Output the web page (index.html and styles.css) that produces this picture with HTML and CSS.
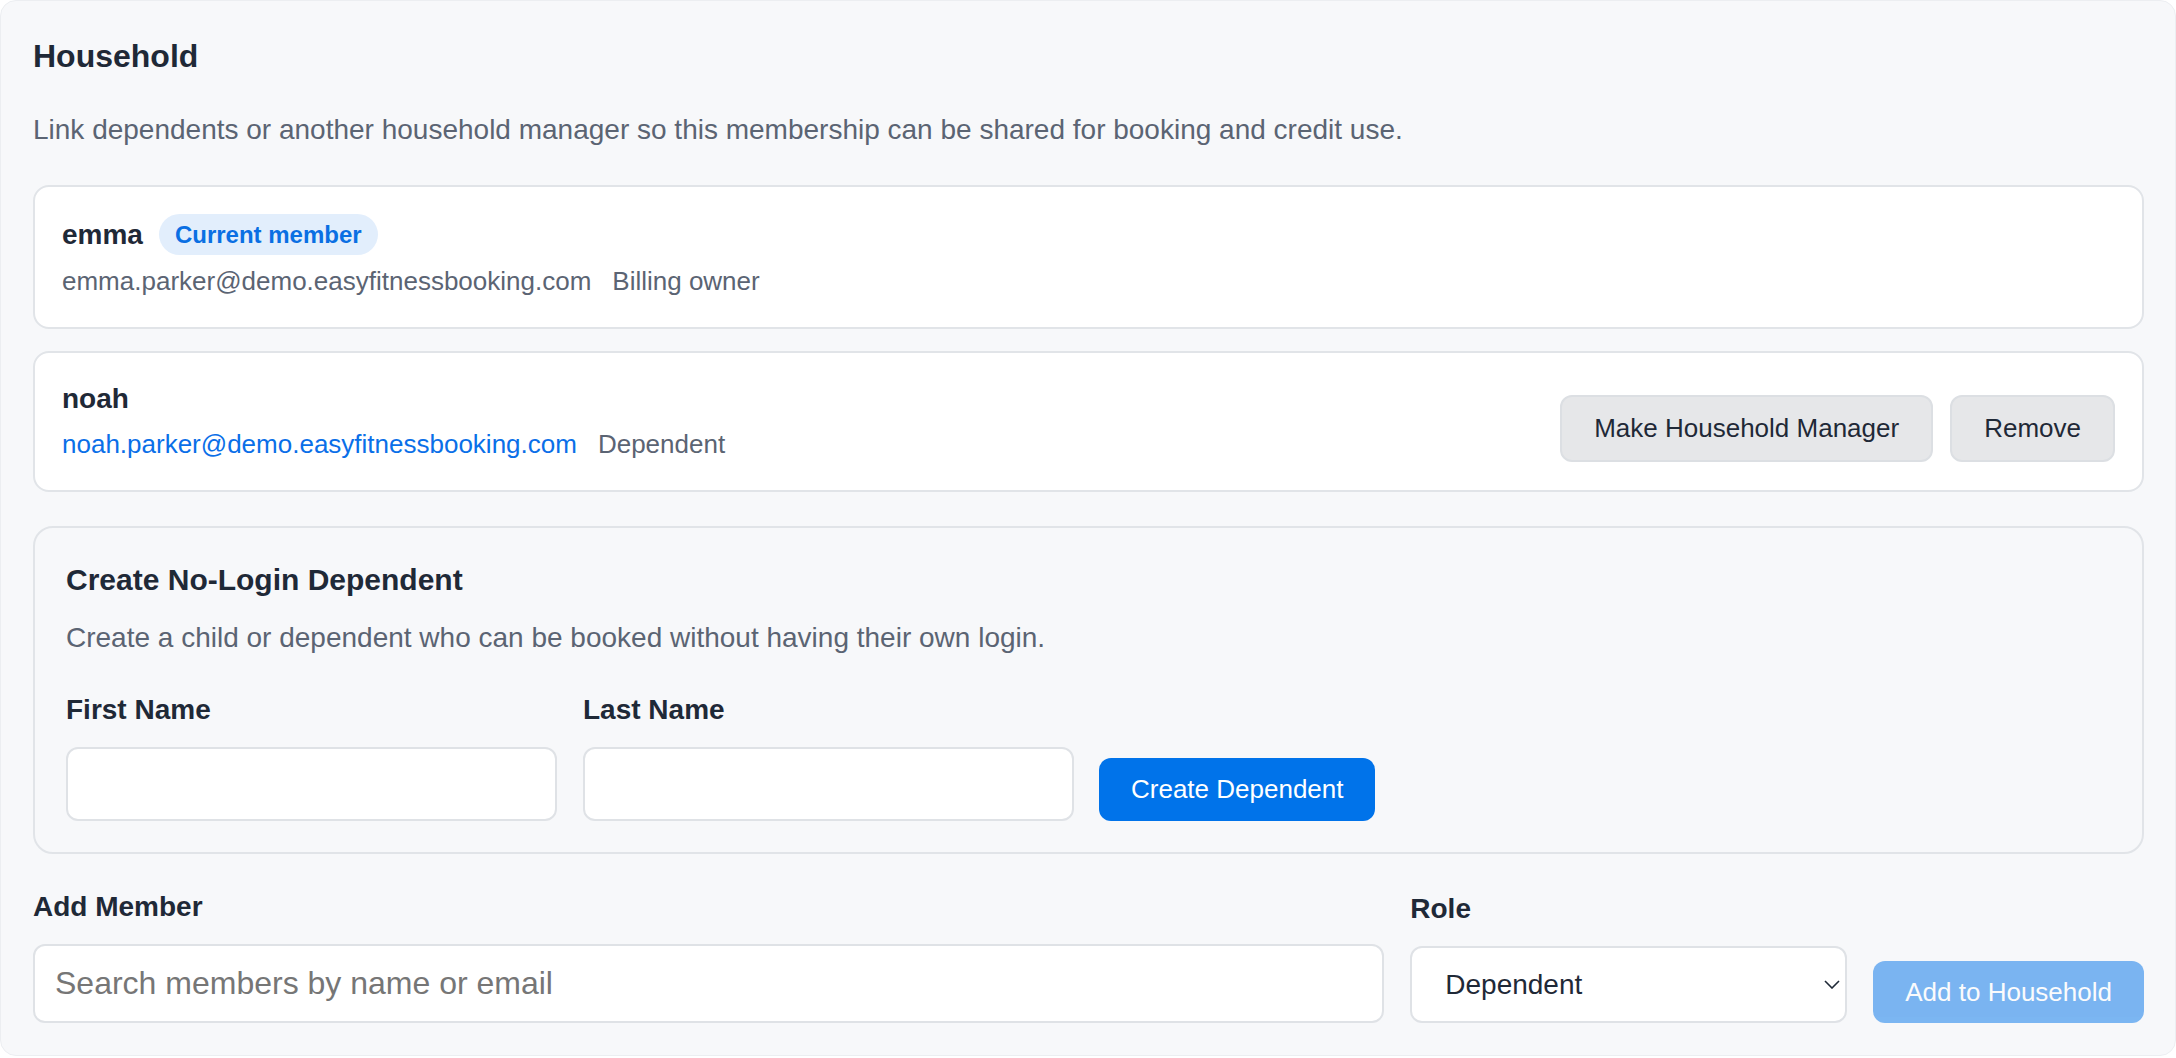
FILE: index.html
```html
<!DOCTYPE html>
<html lang="en">
<head>
    <title>Household</title>
    <meta charset="UTF-8">
    <meta name="viewport" content="width=device-width, initial-scale=1.0">
    <link rel="stylesheet" href="styles.css">
</head>

<body>
    <section class="panel">
        <h2 class="panel-title">Household</h2>
        <p class="panel-desc">Link dependents or another household manager so this membership can be shared for booking and credit use.</p>

        <ul class="members">
            <li class="member">
                <div class="member-info">
                    <div class="member-head">
                        <span class="member-name">emma</span>
                        <span class="badge">Current member</span>
                    </div>
                    <div class="member-meta">
                        <span class="member-email">emma.parker@demo.easyfitnessbooking.com</span>
                        <span class="member-role">Billing owner</span>
                    </div>
                </div>
            </li>
            <li class="member">
                <div class="member-info">
                    <div class="member-head">
                        <span class="member-name">noah</span>
                    </div>
                    <div class="member-meta">
                        <a class="member-email link" href="#">noah.parker@demo.easyfitnessbooking.com</a>
                        <span class="member-role">Dependent</span>
                    </div>
                </div>
                <div class="member-actions">
                    <button class="btn btn-light">Make Household Manager</button>
                    <button class="btn btn-light">Remove</button>
                </div>
            </li>
        </ul>

        <div class="dependent-box">
            <h3 class="box-title">Create No-Login Dependent</h3>
            <p class="box-desc">Create a child or dependent who can be booked without having their own login.</p>
            <form class="dependent-form" onsubmit="return false">
                <label class="field field-name">
                    <span class="field-label">First Name</span>
                    <input class="input" type="text">
                </label>
                <label class="field field-name">
                    <span class="field-label">Last Name</span>
                    <input class="input" type="text">
                </label>
                <button class="btn btn-primary">Create Dependent</button>
            </form>
        </div>

        <form class="add-form" onsubmit="return false">
            <label class="field">
                <span class="field-label">Add Member</span>
                <input class="input input-search" type="text" placeholder="Search members by name or email">
            </label>
            <label class="field">
                <span class="field-label">Role</span>
                <span class="select-wrap">
                    <select class="input select">
                        <option>Dependent</option>
                        <option>Household Manager</option>
                    </select>
                    <svg class="select-arrow" width="16" height="9" viewBox="0 0 16 9"><path d="M1 1l7 7 7-7" fill="none" stroke="#1f2937" stroke-width="1.6"/></svg>
                </span>
            </label>
            <button class="btn btn-primary" disabled>Add to Household</button>
        </form>
    </section>
</body>
</html>
```

FILE: styles.css
```css
html {
    font-family: "Liberation Sans", Arial, Helvetica, sans-serif;
    color: #1f2937;
}

body {
    margin: 0;
    background-color: #fff;
}

.panel {
    box-sizing: border-box;
    min-height: 1056px;
    padding: 36px 31px 30px 32px;
    background-color: #f7f8fa;
    border: 1px solid #eceef1;
    border-radius: 16px;
}

.panel-title {
    margin: 0 0 35px 0;
    font-size: 32px;
    line-height: 38px;
    font-weight: bold;
}

.panel-desc {
    margin: 0 0 35px 0;
    font-size: 28px;
    line-height: 40px;
    color: #5b6473;
}

/* member list */
.members {
    list-style: none;
    margin: 0;
    padding: 0;
    display: flex;
    flex-direction: column;
    gap: 22px;
}

.member {
    display: flex;
    justify-content: space-between;
    align-items: flex-end;
    padding: 27px 27px 28px 27px;
    background-color: #fff;
    border: 2px solid #e1e4e8;
    border-radius: 16px;
}

.member-head {
    display: flex;
    align-items: center;
    gap: 16px;
    min-height: 38px;
}

.member-name {
    font-size: 28px;
    line-height: 38px;
    font-weight: bold;
}

.badge {
    padding: 8px 16px;
    font-size: 24px;
    line-height: 25px;
    font-weight: bold;
    color: #0a6fe3;
    background-color: #e2eefc;
    border-radius: 999px;
}

.member-meta {
    margin-top: 8px;
    display: flex;
    gap: 21px;
    font-size: 26px;
    line-height: 36px;
    color: #5b6473;
}

.link {
    color: #0a6fe8;
    text-decoration: none;
}

.member-actions {
    display: flex;
    gap: 17px;
}

/* buttons */
.btn {
    font-family: inherit;
    font-size: 26px;
    line-height: 31px;
    padding: 16px 32px;
    border-radius: 12px;
    cursor: pointer;
}

.btn-light {
    padding: 16px 32px;
    color: #1f2937;
    background-color: #e6e7e9;
    border: 2px solid #dcdfe3;
}

.btn-primary {
    color: #fff;
    background-color: #0073ea;
    border: none;
}

.btn-primary:disabled {
    opacity: .5;
    cursor: default;
}

/* no-login dependent */
.dependent-box {
    margin-top: 34px;
    padding: 34px 31px 31px 31px;
    border: 2px solid #e1e4e8;
    border-radius: 20px;
}

.box-title {
    margin: 0 0 20px 0;
    font-size: 30px;
    line-height: 36px;
    font-weight: bold;
}

.box-desc {
    margin: 0 0 34px 0;
    font-size: 28px;
    line-height: 40px;
    color: #5b6473;
}

.dependent-form {
    display: flex;
    align-items: flex-end;
    gap: 26px;
}

.dependent-form .btn-primary {
    margin-left: -1px;
}

.field {
    display: flex;
    flex-direction: column;
    gap: 19px;
}

.field-name {
    width: 491px;
}

.field-label {
    font-size: 28px;
    line-height: 36px;
    font-weight: bold;
}

.input {
    box-sizing: border-box;
    height: 74px;
    padding: 0 20px;
    font-family: inherit;
    font-size: 28px;
    color: #1f2937;
    background-color: #fff;
    border: 2px solid #dfe2e6;
    border-radius: 12px;
    outline: none;
}

/* add member */
.add-form {
    margin-top: 35px;
    display: grid;
    grid-template-columns: 1fr 437px auto;
    align-items: end;
    gap: 26px;
}

.input-search {
    height: 79px;
    padding: 0 20px;
    font-size: 32px;
}

.input-search::placeholder {
    color: #767676;
}

.select-wrap {
    position: relative;
    display: block;
}

.select {
    width: 100%;
    height: 77px;
    padding: 0 60px 0 33px;
    -webkit-appearance: none;
    appearance: none;
}

.select-arrow {
    position: absolute;
    right: 7px;
    top: 34px;
    pointer-events: none;
}

.add-form .btn-primary {
    height: 62px;
    padding: 0 32px;
}
```
